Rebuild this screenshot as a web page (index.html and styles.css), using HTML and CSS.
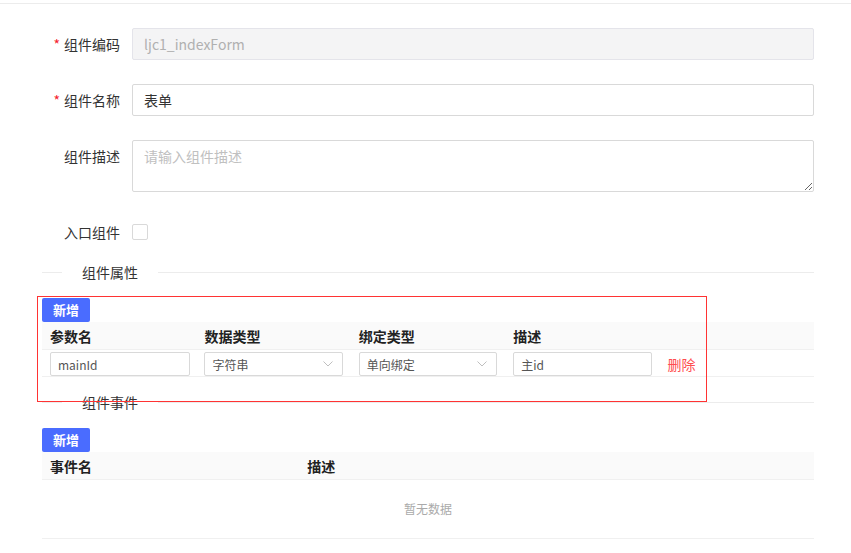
FILE: index.html
```html
<!DOCTYPE html>
<html lang="zh-CN">
<head>
    <meta charset="UTF-8">
    <meta name="viewport" content="width=device-width, initial-scale=1.0">
    <title>组件配置</title>
    <link rel="stylesheet" href="styles.css">
</head>
<body>
    <div class="page">
        <div class="form">
            <div class="form-item">
                <label class="form-label required">组件编码</label>
                <input class="input" type="text" value="ljc1_indexForm" disabled>
            </div>
            <div class="form-item">
                <label class="form-label required">组件名称</label>
                <input class="input" type="text" value="表单">
            </div>
            <div class="form-item">
                <label class="form-label">组件描述</label>
                <textarea class="textarea" placeholder="请输入组件描述"></textarea>
            </div>
            <div class="form-item">
                <label class="form-label">入口组件</label>
                <span class="checkbox"></span>
            </div>
        </div>

        <div class="divider"><span>组件属性</span></div>
        <button class="btn">新增</button>
        <div class="table cols-5">
            <div class="tr th">
                <div class="td">参数名</div>
                <div class="td">数据类型</div>
                <div class="td">绑定类型</div>
                <div class="td">描述</div>
                <div class="td"></div>
            </div>
            <div class="tr">
                <div class="td"><input class="input-sm wide" type="text" value="mainId"></div>
                <div class="td">
                    <div class="select">字符串
                        <svg width="10" height="6" viewBox="0 0 10 6"><path d="M0.5 0.5L5 5L9.5 0.5" fill="none" stroke="#bfbfbf" stroke-width="1"/></svg>
                    </div>
                </div>
                <div class="td">
                    <div class="select">单向绑定
                        <svg width="10" height="6" viewBox="0 0 10 6"><path d="M0.5 0.5L5 5L9.5 0.5" fill="none" stroke="#bfbfbf" stroke-width="1"/></svg>
                    </div>
                </div>
                <div class="td"><input class="input-sm" type="text" value="主id"></div>
                <div class="td"><a class="link-danger">删除</a></div>
            </div>
        </div>

        <div class="divider second"><span>组件事件</span></div>
        <button class="btn">新增</button>
        <div class="table cols-3">
            <div class="tr th">
                <div class="td">事件名</div>
                <div class="td">描述</div>
                <div class="td"></div>
            </div>
            <div class="empty">暂无数据</div>
        </div>

        <div class="mark"></div>
    </div>
</body>
</html>
```

FILE: styles.css
```css
body {
    margin: 0;
    font-family: "Noto Sans CJK SC", "Noto Sans", sans-serif;
    font-size: 14px;
    color: #333;
    background: #fff;
}
.page {
    position: relative;
    margin-top: 3px;
    border-top: 1px solid #ececec;
    padding: 24px 37px 0 42px;
}
.form-item {
    display: flex;
    align-items: flex-start;
    margin-bottom: 24px;
}
.form-item:last-child {
    margin-bottom: 0;
}
.form-label {
    width: 78px;
    padding-right: 12px;
    text-align: right;
    line-height: 32px;
    color: #333;
    flex-shrink: 0;
}
.required::before {
    content: "*";
    color: #f5222d;
    margin-right: 4px;
}
.input,
.textarea {
    flex: 1;
    box-sizing: border-box;
    height: 32px;
    padding: 0 11px;
    border: 1px solid #d9d9d9;
    border-radius: 2px;
    font-family: inherit;
    font-size: 14px;
    color: #333;
    outline: none;
}
.input:disabled {
    background: #f4f4f5;
    border-color: #e4e4ea;
    color: #b0b0b0;
}
.textarea {
    height: 52px;
    padding: 4px 11px;
    line-height: 22px;
}
.textarea::placeholder {
    color: #c0c0c0;
}
.checkbox {
    display: block;
    width: 16px;
    height: 16px;
    margin-top: 8px;
    box-sizing: border-box;
    border: 1px solid #d9d9d9;
    border-radius: 2px;
}
.divider {
    display: flex;
    align-items: center;
    height: 21px;
    margin-top: 14px;
    margin-bottom: 15px;
}
.divider.second {
    margin-top: 15px;
}
.divider::before,
.divider::after {
    content: "";
    height: 1px;
    background: #ececec;
}
.divider::before {
    width: 20px;
}
.divider::after {
    flex: 1;
}
.divider span {
    padding: 0 20px;
    line-height: 21px;
    color: #333;
}
.btn {
    display: block;
    width: 48px;
    height: 24px;
    padding: 0;
    border: none;
    border-radius: 2px;
    background: #4a6cff;
    color: #fff;
    font-family: inherit;
    font-size: 13px;
    font-weight: bold;
    line-height: 24px;
}
.table .tr {
    display: grid;
    border-bottom: 1px solid #f0f0f0;
}
.cols-5 .tr {
    grid-template-columns: repeat(5, 1fr);
}
.cols-3 .tr {
    grid-template-columns: repeat(3, 1fr);
}
.tr .td {
    padding: 0 8px;
    display: flex;
    align-items: center;
    height: 26px;
    min-width: 0;
}
.th {
    background: #fafafa;
}
.th .td {
    height: 27px;
    font-weight: bold;
    color: #222;
}
.input-sm,
.select {
    box-sizing: border-box;
    width: 100%;
    height: 24px;
    margin-top: 2px;
    padding: 0 7px;
    border: 1px solid #d9d9d9;
    border-radius: 2px;
    font-family: inherit;
    font-size: 12px;
    color: #555;
    outline: none;
}
.input-sm.wide {
    width: 140px;
}
.select {
    display: flex;
    align-items: center;
    justify-content: space-between;
    padding-right: 9px;
}
.link-danger {
    color: #ff4d4f;
    margin-top: 2px;
}
.empty {
    height: 58px;
    line-height: 58px;
    text-align: center;
    font-size: 12px;
    color: #aaa;
    border-bottom: 1px solid #f0f0f0;
}
.mark {
    position: absolute;
    left: 37px;
    top: 292px;
    width: 670px;
    height: 106px;
    box-sizing: border-box;
    border: 1px solid #f33;
}
```
